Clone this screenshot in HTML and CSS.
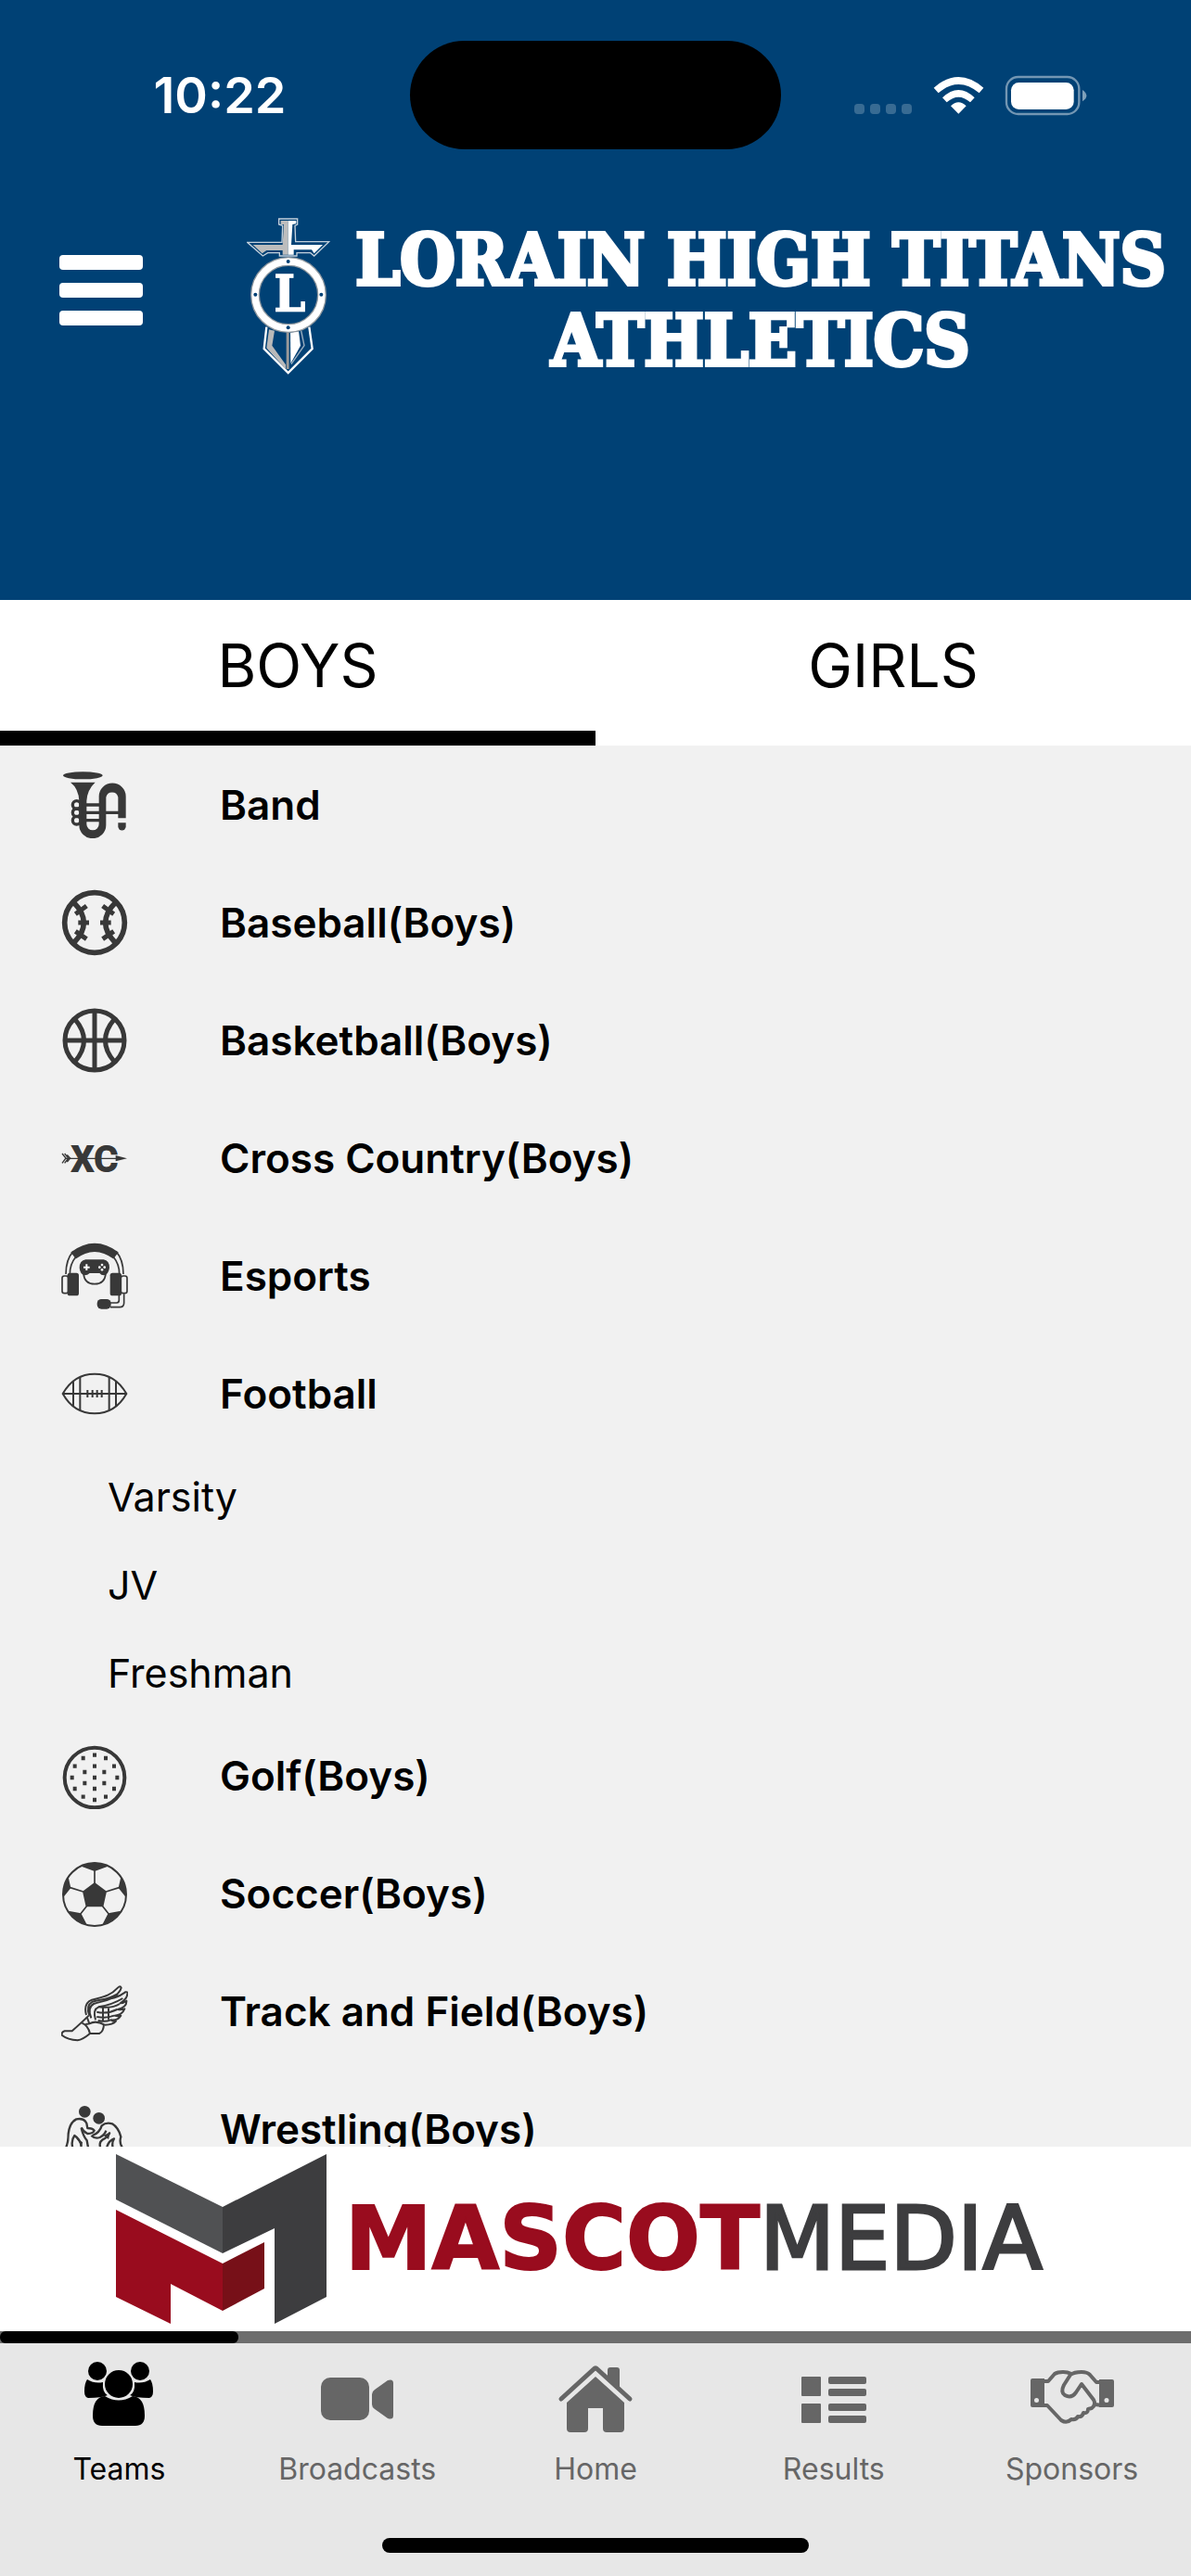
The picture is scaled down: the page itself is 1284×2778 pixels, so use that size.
FILE: index.html
```html
<!DOCTYPE html>
<html lang="en">
<head>
  <meta charset="UTF-8">
  <meta name="viewport" content="width=device-width, initial-scale=1.0">
  <title>Lorain High Titans Athletics</title>
  <link rel="stylesheet" href="styles.css">
</head>
<body>
  <header class="header">
    <div class="status">
      <span class="time">10:22</span>
      <div class="island"></div>
      <svg class="status-icons" viewBox="123 93 753 132" fill="#fff">
        <g opacity=".22">
          <rect x="123" y="186" width="33" height="33" rx="11"/>
          <rect x="174" y="186" width="33" height="33" rx="11"/>
          <rect x="225" y="186" width="33" height="33" rx="11"/>
          <rect x="276" y="186" width="33" height="33" rx="11"/>
        </g>
        <path d="M380 134Q460 64 541 134L527 151Q460 95 395 151ZM408 166Q460 116 512 166L498 181Q460 147 422 181ZM435 193Q460 168 485 193L460 218Z"/>
        <rect x="615" y="99" width="235" height="120" rx="38" fill="none" stroke="#fff" stroke-width="7" opacity=".45"/>
        <rect x="630" y="117" width="203" height="87" rx="25"/>
        <path d="M861 141Q874 150 874 160Q874 170 861 178Z" opacity=".5"/>
      </svg>
    </div>

    <div class="brand">
      <button class="menu" type="button" aria-label="Menu">
        <span></span><span></span><span></span>
      </button>
      <svg class="shield" viewBox="78 70 270 510">
        <path d="M182 76H242V94L234 98 236 150H344L296 196 284 186H240V196H184V186H146L130 196 80 152H192L194 98 182 94Z" fill="#004175" stroke="#c3d0dc" stroke-width="4"/>
        <path d="M188 82H212V192H194V178H142L128 188 98 160H194L198 94H188Z" fill="#bdbdbd"/>
        <path d="M212 82H238V92L226 94 222 160H324L296 188 288 176H230V192H212Z" fill="#fff"/>
        <path d="M142 426L134 496 212 574 290 496 280 426" fill="none" stroke="#fff" stroke-width="7"/>
        <path d="M150 434L168 438 160 486 204 548 204 562 142 494Z" fill="#b9b9b9"/>
        <path d="M206 440H215V562H206Z" fill="#999"/>
        <path d="M219 444L246 440 252 486 220 544Z" fill="#fff"/>
        <path d="M254 438L264 486 222 546" fill="none" stroke="#9fb0c0" stroke-width="4"/>
        <circle cx="213" cy="322" r="108" fill="#004175" stroke="#8e979e" stroke-width="30"/>
        <circle cx="213" cy="322" r="108" fill="none" stroke="#fff" stroke-width="22"/>
        <g fill="#004175">
          <circle cx="212" cy="214" r="6"/><circle cx="212" cy="428" r="6"/>
          <circle cx="106" cy="321" r="6"/><circle cx="319" cy="321" r="6"/>
        </g>
        <text class="shield-letter" x="217" y="376" text-anchor="middle">L</text>
      </svg>
      <h1>LORAIN HIGH TITANS<br>ATHLETICS</h1>
    </div>
  </header>

  <div class="tabs" role="tablist">
    <button class="tab active" type="button" role="tab" aria-selected="true">BOYS</button>
    <button class="tab" type="button" role="tab" aria-selected="false">GIRLS</button>
  </div>

  <main class="teams">
    <ul>
      <li>
        <a class="team" href="#band">
          <svg viewBox="79 65 216 216">
            <ellipse cx="149" cy="78" rx="64" ry="12"/>
            <path d="M109 100H189Q163 124 161 160V235A20 20 0 0 0 201 235V145A43 42 0 0 1 288 145V216H263V148A20 20 0 0 0 224 148V238A43 43 0 0 1 137 238V160Q135 120 109 100Z"/>
            <path class="line" stroke-width="10" d="M158 173H204M158 198H265M158 223H204"/>
            <g class="line" stroke-width="10"><circle cx="129" cy="173" r="13"/><circle cx="129" cy="198" r="13"/><circle cx="129" cy="223" r="13"/></g>
            <path d="M263 231H288V243A12 12 0 0 1 263 243Z"/>
          </svg>
          Band
        </a>
      </li>
      <li>
        <a class="team" href="#baseball">
          <svg viewBox="79 447 216 216">
            <g class="line" stroke-width="17">
              <circle cx="187" cy="555" r="97"/>
              <path d="M118 488Q186 555 118 622M256 488Q188 555 256 622"/>
              <path stroke-width="15" d="M125 527L161 501M134 555H169M125 583L161 608M249 527L213 501M240 555H205M249 583L213 608"/>
            </g>
          </svg>
          Baseball(Boys)
        </a>
      </li>
      <li>
        <a class="team" href="#basketball">
          <svg viewBox="79 828 216 216">
            <g class="line" stroke-width="15">
              <circle cx="187" cy="936" r="96"/>
              <path d="M187 840V1032M91 936H283M124 868Q181 936 124 1004M250 868Q193 936 250 1004"/>
            </g>
          </svg>
          Basketball(Boys)
        </a>
      </li>
      <li>
        <a class="team" href="#cross-country">
          <svg viewBox="79 97 216 216">
            <text class="xc" x="148" y="250" text-anchor="middle">X</text>
            <text class="xc" x="224" y="250" text-anchor="middle">C</text>
            <path d="M226 197H258L292 206 258 216H226Z" fill="#f1f1f1"/>
            <path class="line" stroke-width="4" d="M92 206H258"/>
            <path d="M255 196L292 206 255 215Z"/>
            <path class="line" stroke-width="4" d="M82 190L94 205 82 221M90 190L102 205 90 221M98 194L108 205 98 217"/>
          </svg>
          Cross Country(Boys)
        </a>
      </li>
      <li>
        <a class="team" href="#esports">
          <svg viewBox="79 480 216 216">
            <path class="line" stroke-width="27" d="M118 522Q187 470 256 522"/>
            <path class="line" stroke-width="5" d="M94 582Q94 535 118 508M107 582Q107 550 125 528M280 582Q280 535 256 508M267 582Q267 550 249 528"/>
            <rect x="99" y="578" width="37" height="74" rx="8"/>
            <rect x="237" y="578" width="37" height="74" rx="8"/>
            <g class="line" stroke-width="5">
              <rect x="82" y="588" width="20" height="56" rx="7"/>
              <rect x="272" y="588" width="20" height="56" rx="7"/>
              <path d="M238 675H258Q266 675 266 667V650M238 689H268Q282 689 282 675V646"/>
              <path d="M151 580Q154 614 187 614T223 580"/>
            </g>
            <rect x="195" y="663" width="45" height="32" rx="14"/>
            <path d="M158 535H216Q235 538 235 562 232 584 217 586 208 586 203 579H171Q164 586 155 586 140 584 138 562 138 538 158 535Z"/>
            <path d="M161 550V570M151 560H171" stroke="#fff" stroke-width="6"/>
            <g fill="#fff"><circle cx="211" cy="552" r="4"/><circle cx="211" cy="568" r="4"/><circle cx="203" cy="560" r="4"/><circle cx="219" cy="560" r="4"/></g>
          </svg>
          Esports
        </a>
      </li>
      <li>
        <a class="team" href="#football">
          <svg viewBox="79 862 216 216">
            <g class="line" stroke-width="6">
              <path d="M84 970Q120 906 187 906T290 970Q254 1034 187 1034T84 970ZM84 970H290"/>
              <path d="M118 930V1010M140 916V1024M234 916V1024M256 930V1010"/>
              <path d="M164 958V982M180 958V982M195 958V982M210 958V982"/>
            </g>
          </svg>
          Football
        </a>
        <ul class="levels">
          <li><a href="#football-varsity">Varsity</a></li>
          <li><a href="#football-jv">JV</a></li>
          <li><a href="#football-freshman">Freshman</a></li>
        </ul>
      </li>
      <li>
        <a class="team" href="#golf">
          <svg viewBox="79 56 216 216">
            <circle class="line" stroke-width="12" cx="187" cy="170" r="97"/>
            <path class="line" stroke-width="13" d="M181 97h12M217 107h12M244 133h12M254 170h12M244 206h12M217 232h12M181 242h12M144 232h12M117 206h12M108 170h12M117 133h12M144 107h12M181 133h12M212 152h12M212 188h12M181 206h12M149 188h12M149 152h12M181 170h12"/>
          </svg>
          Golf(Boys)
        </a>
      </li>
      <li>
        <a class="team" href="#soccer">
          <svg viewBox="79 440 216 216">
            <circle class="line" stroke-width="6" cx="187" cy="551" r="102"/>
            <path d="M187 512L226 541 215 591H159L148 541ZM187 476L144 460Q187 437 230 460ZM264 530L272 495Q290 520 288 560ZM110 530L102 495Q84 520 86 560ZM231 612L272 604Q250 640 211 651ZM143 612L102 604Q124 640 163 651Z"/>
            <path class="line" stroke-width="5" d="M187 515V474M224 542L266 529M150 542L108 529M213 589L232 613M161 589L142 613"/>
          </svg>
          Soccer(Boys)
        </a>
      </li>
      <li>
        <a class="team" href="#track">
          <svg viewBox="79 818 216 216">
            <g class="line" stroke-width="6" stroke-linejoin="round">
              <path d="M168 940Q150 958 114 990H90Q79 993 81 1003 100 1018 132 1020 148 1018 172 998H202Q216 992 217 968"/>
              <path d="M146 964Q166 972 172 998M162 944L170 966Q192 954 219 970M158 968L172 966"/>
              <path d="M160 938Q150 900 178 889C212 880 236 878 262 850Q270 842 273 850C270 864 256 875 240 884C262 882 274 872 286 864Q296 862 293 870C292 884 282 892 270 900Q280 900 290 892 292 912 262 920 274 922 284 918 276 938 252 940 262 944 272 940 262 956 240 954 248 960 256 958 246 970 220 970"/>
              <path d="M176 948Q162 914 184 902C214 892 238 892 262 872M190 954Q180 920 200 912C226 908 252 900 278 884M170 940Q158 908 180 895C212 887 236 886 256 872"/>
              <path d="M200 912C230 916 250 914 268 902M194 928Q228 936 260 920M194 944Q226 950 250 940M198 956Q222 962 238 954M232 914V952M214 914V958"/>
            </g>
          </svg>
          Track and Field(Boys)
        </a>
      </li>
      <li>
        <a class="team" href="#wrestling">
          <svg viewBox="79 1199 216 216">
            <circle cx="155" cy="1251" r="19"/>
            <circle cx="201" cy="1272" r="19"/>
            <g class="line" stroke-width="7" stroke-linejoin="round">
              <path d="M94 1368Q102 1350 102 1322 106 1286 128 1275 152 1270 161 1288L164 1304Q180 1304 186 1312 182 1322 164 1322 150 1316 144 1302"/>
              <path d="M116 1368Q110 1344 122 1328 142 1340 144 1366M144 1304Q150 1330 162 1344L166 1366"/>
              <path d="M176 1328Q188 1340 204 1334 220 1326 224 1312M180 1328Q204 1318 210 1296 224 1284 244 1290 264 1302 272 1332 266 1350 276 1366"/>
              <path d="M236 1318Q232 1332 212 1342 200 1350 206 1368M226 1368Q232 1344 250 1338 242 1350 246 1368"/>
            </g>
            <path d="M216 1328L238 1316 232 1340ZM122 1330L148 1350 146 1362Z"/>
          </svg>
          Wrestling(Boys)
        </a>
      </li>
    </ul>
  </main>

  <a class="sponsor" href="#mascot-media">
    <svg viewBox="0 0 227 183">
      <path d="M0 0L115 57V107L0 49Z" fill="#505153"/>
      <path d="M227 0L115 57V107L171 80V183L227 154Z" fill="#3d3d3f"/>
      <path d="M0 60L115 118V169L59 140V183L0 154Z" fill="#990c1e"/>
      <path d="M115 118L160 95V145L115 169Z" fill="#771018"/>
    </svg>
    <span class="sponsor-name"><b>MASCOT</b>MEDIA</span>
  </a>

  <div class="progress"><div class="progress-fill"></div></div>

  <footer class="footer">
    <nav class="nav">
      <a class="active" href="#teams">
        <svg viewBox="0 0 96 84">
          <circle cx="25" cy="14" r="10"/><circle cx="71" cy="14" r="10"/>
          <path d="M14 23Q22 28 31 26 30 37 36 40 30 43 15 43 11 42 11 36 11 27 14 23ZM82 23Q74 28 65 26 66 37 60 40 66 43 81 43 85 42 85 36 85 27 82 23Z"/>
          <path d="M33 41Q48 50 63 41 76 42 76 62 76 73 66 73H30Q20 73 20 62 20 42 33 41Z"/>
          <circle cx="48" cy="28" r="16" stroke="#e7e7e7" stroke-width="2"/>
        </svg>
        Teams
      </a>
      <a href="#broadcasts">
        <svg viewBox="0 0 96 84">
          <rect x="9" y="21" width="52" height="46" rx="10"/>
          <path d="M64 39Q64 36 67 34L81 24Q87 22 87 27V62Q87 67 81 65L67 55Q64 53 64 50Z"/>
        </svg>
        Broadcasts
      </a>
      <a href="#home">
        <svg viewBox="0 0 96 84">
          <path d="M48 20L79 48V76Q79 80 75 80H60Q56 80 56 76V54H40V76Q40 80 36 80H21Q17 80 17 76V48Z"/>
          <path d="M61 22V13Q61 10 64 10H71Q74 10 74 13V34Z"/>
          <path d="M11 44L46 12Q48 10 50 12L85 44" fill="none" stroke="currentColor" stroke-width="5" stroke-linecap="round"/>
        </svg>
        Home
      </a>
      <a href="#results">
        <svg viewBox="0 0 96 84">
          <rect x="13" y="20" width="21" height="21" rx="1"/><rect x="13" y="49" width="21" height="21" rx="1"/>
          <rect x="42" y="20" width="41" height="8" rx="2"/><rect x="42" y="33" width="41" height="8" rx="2"/>
          <rect x="42" y="49" width="41" height="8" rx="2"/><rect x="42" y="62" width="41" height="8" rx="2"/>
        </svg>
        Results
      </a>
      <a href="#sponsors">
        <svg viewBox="0 0 96 84">
          <path fill-rule="evenodd" d="M5 22H18V53H5Q3 53 3 51V24Q3 22 5 22ZM9.500 43A2.500 2.500 0 1 0 9.500 48A2.500 2.500 0 1 0 9.500 43ZM77 23H91Q93 23 93 25V51Q93 53 91 53H77ZM85 43A2.500 2.500 0 1 0 85 48A2.500 2.500 0 1 0 85 43Z"/>
          <path d="M16 25H22L29 17Q32 15 38 15 43 15 47 17M80 26H74L67 18Q64 15 58 15 50 15 46 18L39 29Q35 37 40 40 47 44 52 37L58 28 71 45Q74 50 69 54L65 55Q65 60 60 59 59 64 54 63 52 67 47 66 42 71 36 67L21 51H16M73 50L80 51" fill="none" stroke="currentColor" stroke-width="4" stroke-linejoin="round"/>
        </svg>
        Sponsors
      </a>
    </nav>
    <div class="home-indicator"></div>
  </footer>
</body>
</html>
```

FILE: styles.css
```css
* {
  box-sizing: border-box;
}

body {
  margin: 0;
  height: 100vh;
  display: flex;
  flex-direction: column;
  font-family: Inter, "Liberation Sans", sans-serif;
  color: #000;
  background-color: #f1f1f1;
}

ul {
  list-style: none;
  margin: 0;
  padding: 0;
}

a {
  color: inherit;
  text-decoration: none;
}

button {
  border: none;
  padding: 0;
  background: none;
  font: inherit;
  color: inherit;
  cursor: pointer;
}

/* header */
.header {
  background-color: #004175;
  color: #fff;
  padding: 44px 0 236px;
}

.status {
  display: grid;
  grid-template-columns: 1fr 400px 1fr;
  align-items: center;
}

.time {
  padding-left: 32px;
  text-align: center;
  font-size: 54px;
  font-weight: 600;
}

.island {
  height: 117px;
  border-radius: 60px;
  background-color: #000;
}

.status-icons {
  width: 251px;
  height: 44px;
  justify-self: end;
  margin-right: 112px;
}

.brand {
  display: flex;
  align-items: flex-start;
  padding: 73px 24px 0 64px;
}

.menu {
  display: flex;
  flex-direction: column;
  flex-shrink: 0;
  gap: 14px;
  width: 90px;
  margin: 41px 112px 0 0;
}

.menu span {
  height: 16px;
  border-radius: 4px;
  background-color: #fff;
}

.shield {
  flex-shrink: 0;
  width: 90px;
  height: 170px;
}

.shield-letter {
  font-family: "DejaVu Serif Condensed", "DejaVu Serif", serif;
  font-size: 160px;
  font-weight: bold;
  fill: #fff;
  stroke: #fff;
  stroke-width: 4px;
}

.brand h1 {
  flex: 1;
  margin: 3px 0 0 24px;
  font-family: "DejaVu Serif Condensed", "DejaVu Serif", serif;
  font-size: 76px;
  line-height: 87px;
  font-weight: bold;
  -webkit-text-stroke: 4px #fff;
  text-align: center;
  white-space: nowrap;
}

/* boys / girls */
.tabs {
  display: flex;
  background-color: #fff;
}

.tab {
  flex: 1;
  height: 157px;
  border-bottom: 16px solid transparent;
  font-size: 64px;
}

.tab.active {
  border-bottom-color: #000;
}

/* team list */
.teams {
  flex: 1;
  min-height: 0;
  overflow-y: auto;
  scrollbar-width: none;
}

.team {
  display: flex;
  align-items: center;
  gap: 99px;
  height: 127px;
  padding-left: 66px;
  font-size: 44px;
  font-weight: 600;
}

.team svg {
  width: 72px;
  height: 72px;
  fill: #383838;
}

.team .line {
  fill: none;
  stroke: #383838;
}

.xc {
  font-family: Roboto, sans-serif;
  font-size: 122px;
  font-weight: 900;
}

.levels a {
  display: flex;
  align-items: center;
  height: 95px;
  padding-left: 116px;
  font-size: 43px;
}

/* sponsor banner */
.sponsor {
  display: flex;
  align-items: center;
  gap: 20px;
  height: 199px;
  padding-left: 125px;
  background-color: #fff;
  color: #3d3d3f;
}

.sponsor svg {
  width: 227px;
  height: 183px;
}

.sponsor-name {
  font-family: "DejaVu Sans", sans-serif;
  font-size: 94px;
  -webkit-text-stroke: 3px #3d3d3f;
}

.sponsor-name b {
  color: #990c1e;
  -webkit-text-stroke: 2px #990c1e;
}

.progress {
  height: 13px;
  background-color: #6d6d6d;
}

.progress-fill {
  width: 20%;
  height: 100%;
  border-radius: 6px;
  background-color: #000;
}

/* bottom navigation */
.footer {
  background-color: #e7e7e7;
  padding: 16px 0 25px;
}

.nav {
  display: flex;
}

.nav a {
  flex: 1;
  display: flex;
  flex-direction: column;
  align-items: center;
  gap: 16px;
  font-size: 32px;
  line-height: 40px;
  color: #666;
}

.nav a.active {
  color: #000;
}

.nav svg {
  width: 96px;
  height: 84px;
  fill: currentColor;
}

.home-indicator {
  width: 460px;
  height: 16px;
  margin: 54px auto 0;
  border-radius: 8px;
  background-color: #000;
}
```
